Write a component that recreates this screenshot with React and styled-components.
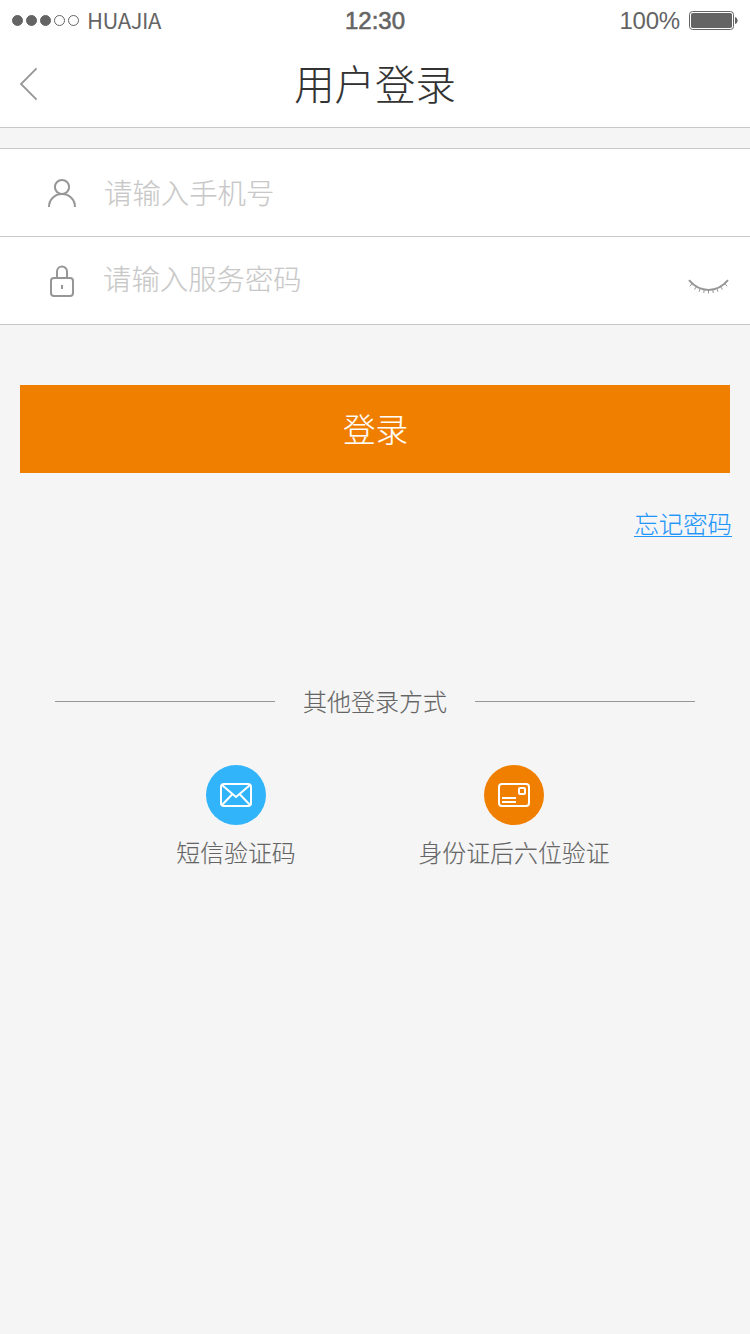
import React, { useState } from 'react'
import styled, { createGlobalStyle } from 'styled-components'

const GlobalStyle = createGlobalStyle`
* {
  box-sizing: border-box;
}
body {
  margin: 0;
  background-color: #f5f5f5;
  font-family: "Noto Sans CJK SC", sans-serif;
  font-weight: 300;
  -webkit-text-stroke: .12px currentColor;
}
`;

const Page = styled.main`
width: 750px;
min-height: 1334px;
background-color: #f5f5f5;
`;

const Header = styled.header`
height: 128px;
background-color: #fff;
border-bottom: 1px solid #c8c8c8;
`;

const StatusBar = styled.div`
display: grid;
grid-template-columns: 1fr auto 1fr;
align-items: center;
height: 41px;
padding: 0 12px;
color: #646464;
font-family: "Liberation Sans", Arial, sans-serif;
font-weight: 400;
-webkit-text-stroke: 0;
`;

const Signal = styled.div`
display: flex;
align-items: center;
gap: 3px;
`;

const Dot = styled.span`
width: 11px;
height: 11px;
border: 1px solid #646464;
border-radius: 50%;
background-color: ${props => props.$on ? '#646464' : 'transparent'};
`;

const Carrier = styled.span`
margin-left: 5px;
padding-bottom: 3px;
font-family: "Noto Sans CJK SC", sans-serif;
font-size: 22px;
line-height: 30px;
letter-spacing: -.4px;
`;

const Clock = styled.div`
font-size: 24px;
-webkit-text-stroke: .6px #646464;
`;

const Power = styled.div`
display: flex;
align-items: center;
justify-content: flex-end;
gap: 9px;
font-size: 24px;
letter-spacing: -.2px;
`;

const NavBar = styled.div`
display: grid;
grid-template-columns: 60px 1fr 60px;
align-items: center;
height: 86px;
`;

const BackButton = styled.button`
display: flex;
padding: 0 0 0 19px;
border: 0;
background: none;
`;

const Title = styled.h1`
margin: 0;
padding-bottom: 2px;
color: #323232;
font-size: 40.4px;
font-weight: 300;
line-height: 60px;
text-align: center;
`;

const Form = styled.form`
margin-top: 20px;
`;

const Fields = styled.div`
background-color: #fff;
border-top: 1px solid #c8c8c8;
`;

const Field = styled.label`
display: flex;
align-items: center;
height: 88px;
padding: 0 20px 0 46px;
border-bottom: 1px solid #c8c8c8;
`;

const Input = styled.input`
flex: 1;
min-width: 0;
height: 44px;
margin-left: ${props => props.$indent};
margin-bottom: ${props => props.$lift};
padding: 0;
border: 0;
outline: 0;
background: none;
color: #323232;
font: inherit;
font-size: 28.4px;
&::placeholder {
  color: #c8c8c8;
  opacity: 1;
}
`;

const EyeButton = styled.button`
display: flex;
padding: 11px 0 0;
border: 0;
background: none;
`;

const LoginButton = styled.button`
display: block;
width: 710px;
height: 88px;
margin: 60px auto 0;
padding: 0 0 3px 1px;
border: 0;
background-color: #f07f00;
color: #fff;
font: inherit;
font-size: 32.6px;
`;

const LinkRow = styled.div`
display: flex;
justify-content: flex-end;
padding: 35px 18px 0 0;
`;

const ForgotLink = styled.a`
height: 29px;
border-bottom: 1px solid #1e96fa;
color: #1e96fa;
font-size: 24.4px;
line-height: 30px;
text-decoration: none;
`;

const Divider = styled.div`
display: grid;
grid-template-columns: 220px 1fr 220px;
align-items: center;
margin: 147px 55px 0;
color: #646464;
font-size: 24px;
line-height: 34px;
text-align: center;
&::before, &::after {
  content: "";
  height: 1px;
  background-color: #969696;
}
`;

const Methods = styled.div`
display: grid;
grid-template-columns: 278px 278px;
justify-content: center;
margin-top: 47px;
`;

const Method = styled.button`
display: flex;
flex-direction: column;
align-items: center;
padding: 0;
border: 0;
background: none;
color: #646464;
font: inherit;
font-size: 23.9px;
line-height: 34px;
white-space: nowrap;
`;

const Circle = styled.span`
display: flex;
align-items: center;
justify-content: center;
width: 60px;
height: 60px;
margin-bottom: 10px;
border-radius: 50%;
background-color: ${props => props.$color};
`;

const BatteryIcon = () => (
  <svg width="49" height="19" viewBox="0 0 49 19" fill="none">
    <rect x=".5" y=".5" width="44" height="18" rx="3" stroke="#646464" />
    <rect x="2" y="2" width="41" height="15" rx="1.8" fill="#646464" />
    <path d="M46 6c3.500 1 3.500 6 0 7z" fill="#646464" />
  </svg>
)

const BackIcon = () => (
  <svg width="20" height="34" viewBox="0 0 20 34" fill="none" stroke="#969696" strokeWidth="1.8">
    <path d="M17.6 1.3L2 17l15.6 15.7" />
  </svg>
)

const UserIcon = () => (
  <svg width="32" height="32" viewBox="0 0 32 32" fill="none" stroke="#969696" strokeWidth="2">
    <circle cx="16" cy="10" r="7.1" />
    <path d="M3 30c0-7.4 5.700-13 13-13s13 5.600 13 13" />
  </svg>
)

const LockIcon = () => (
  <svg width="32" height="34" viewBox="0 0 32 34" fill="none" stroke="#969696" strokeWidth="2">
    <rect x="5" y="14" width="22" height="18" rx="3" />
    <path d="M11 14V7.500a5 5 0 0 1 10 0V14M16 21v4" />
  </svg>
)

const EyeIcon = () => (
  <svg width="42" height="15" viewBox="0 0 42 15" fill="none" stroke="#969696">
    <path d="M1 1.200c11 13 28 13 39 0" strokeWidth="2" />
    <path d="M4 4.500L2 7.300M8.300 7.700L6.500 10.700M12.200 9.500L11 12.800M16.200 10.500L15.800 14M20.500 11v3.500M24.800 10.500l.4 3.500M28.800 9.500l1.200 3.300M32.700 7.700l1.800 3M37 4.500L39 7.300" />
  </svg>
)

const MailIcon = () => (
  <svg width="32" height="24" viewBox="0 0 32 24" fill="none" stroke="#fff" strokeWidth="2">
    <rect x="1" y="1" width="30" height="22" rx="3" />
    <path d="M2 2l10.500 9L16 14l3.500-3L30 2M12.500 11L2 22M19.500 11L30 22" />
  </svg>
)

const CardIcon = () => (
  <svg width="32" height="24" viewBox="0 0 32 24" fill="none" stroke="#fff" strokeWidth="2">
    <rect x="1" y="1" width="30" height="22" rx="3" />
    <rect x="21" y="5" width="6" height="6" rx="1" />
    <path d="M4 15h14M4 19h14" />
  </svg>
)

function App() {
  const [visible, setVisible] = useState(false)

  return (
    <Page>
      <GlobalStyle />
      <Header>
        <StatusBar>
          <Signal>
            {[1, 2, 3, 4, 5].map(n => <Dot key={n} $on={n <= 3} />)}
            <Carrier>HUAJIA</Carrier>
          </Signal>
          <Clock>12:30</Clock>
          <Power>100%<BatteryIcon /></Power>
        </StatusBar>
        <NavBar>
          <BackButton><BackIcon /></BackButton>
          <Title>用户登录</Title>
        </NavBar>
      </Header>
      <Form onSubmit={e => e.preventDefault()}>
        <Fields>
          <Field>
            <UserIcon />
            <Input type="tel" placeholder="请输入手机号" $indent="26px" $lift="2px" />
          </Field>
          <Field>
            <LockIcon />
            <Input type={visible ? 'text' : 'password'} placeholder="请输入服务密码" $indent="25px" $lift="6px" />
            <EyeButton type="button" onClick={() => setVisible(!visible)}><EyeIcon /></EyeButton>
          </Field>
        </Fields>
        <LoginButton>登录</LoginButton>
      </Form>
      <LinkRow>
        <ForgotLink href="#">忘记密码</ForgotLink>
      </LinkRow>
      <Divider>其他登录方式</Divider>
      <Methods>
        <Method>
          <Circle $color="#32b4fa"><MailIcon /></Circle>
          短信验证码
        </Method>
        <Method>
          <Circle $color="#f07f00"><CardIcon /></Circle>
          身份证后六位验证
        </Method>
      </Methods>
    </Page>
  )
}

export default App
